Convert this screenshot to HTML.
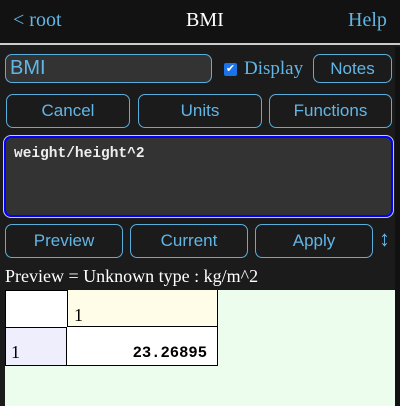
<!DOCTYPE html>
<html><head><style>
*{box-sizing:border-box;margin:0;padding:0}
body{width:400px;height:406px;background:#1b1b1b;position:relative;overflow:hidden;font-family:"Liberation Sans",sans-serif}
.a{position:absolute}
.hdr{left:0;top:0;width:400px;height:45px;background:#121212;border-bottom:2px solid #ccc}
.t{font-family:"Liberation Serif",serif;font-size:20px}
.btn{position:absolute;border:1.5px solid #5aaedc;border-radius:7px;color:#62b6e6;font-size:17px;display:flex;align-items:center;justify-content:center;background:#1b1b1b}
</style></head><body>
<div class="a hdr"></div>
<div class="a t" style="left:13px;top:9px;color:#62b6e6">&lt; root</div>
<div class="a t" style="left:186px;top:9px;color:#fff">BMI</div>
<div class="a t" style="left:348px;top:9px;color:#62b6e6">Help</div>
<div class="a" style="left:395px;top:47px;width:5px;height:359px;background:#111"></div>

<div class="a" style="left:5px;top:54px;width:207px;height:29px;border:1.5px solid #5aaedc;border-radius:7px;background:#333;color:#62b6e6;font-size:20px;padding:2px 4px;line-height:23px">BMI</div>
<div class="a" style="left:224px;top:63px;width:13px;height:13px;background:#1a73e8;border-radius:2px;color:#fff;font-size:11px;line-height:13px;text-align:center">✔</div>
<div class="a t" style="left:244px;top:58px;color:#62b6e6;font-size:19px">Display</div>
<div class="btn" style="left:313px;top:54px;width:79px;height:29px">Notes</div>

<div class="btn" style="left:6px;top:94px;width:124px;height:34px">Cancel</div>
<div class="btn" style="left:138px;top:94px;width:124px;height:34px">Units</div>
<div class="btn" style="left:269px;top:94px;width:123px;height:34px">Functions</div>

<div class="a" style="left:4px;top:136px;width:389px;height:81px;border:2px solid #00f;outline:1px solid #ccc;border-radius:7px;background:#333;color:#eee;font-family:'Liberation Mono',monospace;font-weight:bold;font-size:14.5px;padding:8px 8px">weight/height^2</div>

<div class="btn" style="left:5px;top:224px;width:118px;height:34px">Preview</div>
<div class="btn" style="left:130px;top:224px;width:118px;height:34px">Current</div>
<div class="btn" style="left:255px;top:224px;width:118px;height:34px">Apply</div>
<div class="a" style="left:379px;top:226px;color:#62b6e6;font-size:22px">↕</div>

<div class="a t" style="left:5px;top:266px;color:#fff;font-size:18px">Preview = Unknown type : kg/m^2</div>
<div class="a" style="left:5px;top:290px;width:390px;height:116px;background:#edfded"></div>
<div class="a" style="left:5px;top:290px;width:213px;height:76px;border:1px solid #000;background:#fff"></div>
<div class="a" style="left:67px;top:290px;width:150px;height:37px;background:#fffde7;border-left:1px solid #000;border-bottom:1px solid #000"></div>
<div class="a" style="left:6px;top:327px;width:61px;height:38px;background:#eeeefc;border-top:1px solid #000;border-right:1px solid #000"></div>
<div class="a t" style="left:74px;top:305px;font-size:18px;color:#000">1</div>
<div class="a t" style="left:11px;top:342px;font-size:18px;color:#000">1</div>
<div class="a" style="left:100px;top:344px;width:107px;text-align:right;font-family:'Liberation Mono',monospace;font-weight:bold;font-size:15.5px;color:#000">23.26895</div>
</body></html>
